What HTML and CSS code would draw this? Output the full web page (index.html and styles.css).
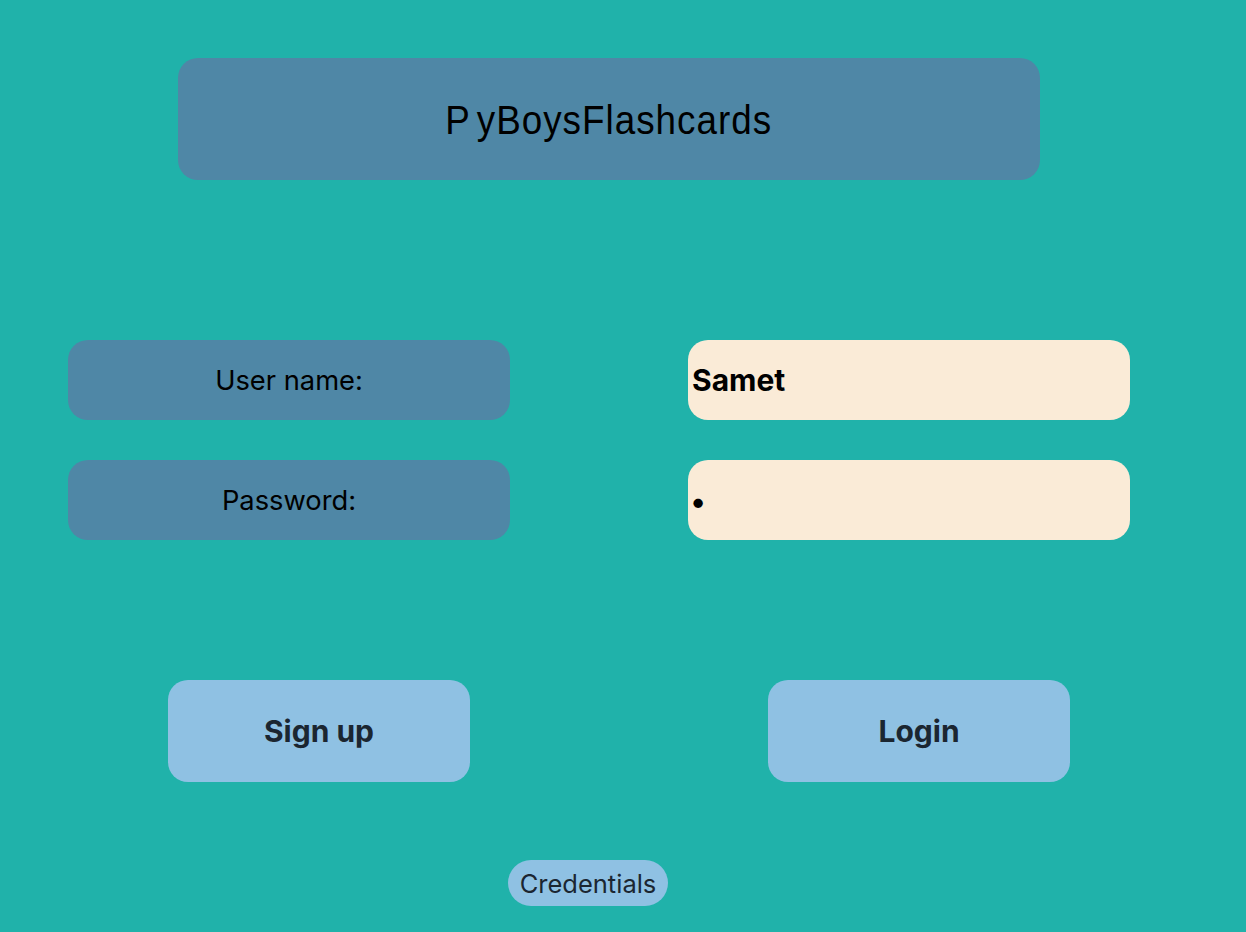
FILE: index.html
```html
<!DOCTYPE html>
<html>
<head>
<meta charset="utf-8">
<title>PyBoysFlashcards</title>
<link rel="stylesheet" href="styles.css">
</head>
<body>
<div class="page">
  <header class="title-box"><h1 class="title">P yBoysFlashcards</h1></header>
  <form class="form">
    <div class="label-box">User name:</div>
    <input class="field field-user" type="text" value="Samet">
    <div class="label-box">Password:</div>
    <input class="field field-pass" type="password" value="a">
  </form>
  <div class="actions">
    <button class="btn" type="button">Sign up</button>
    <button class="btn" type="button">Login</button>
  </div>
  <div class="footer">
    <button class="cred" type="button">Credentials</button>
  </div>
</div>
</body>
</html>
```
FILE: styles.css
```css
html, body {
  margin: 0;
  padding: 0;
  background: #20b2aa;
}
body {
  font-family: Inter, "Noto Sans", sans-serif;
  width: 1246px;
  height: 932px;
  overflow: hidden;
}
.page {
  display: flex;
  flex-direction: column;
  padding-top: 58px;
}
.title-box {
  margin-left: 178px;
  width: 862px;
  height: 122px;
  background: #4f87a6;
  border-radius: 20px;
  display: flex;
  align-items: center;
  justify-content: center;
}
.title {
  margin: 0;
  font-family: "Liberation Sans", Arial, sans-serif;
  font-weight: 400;
  font-size: 40px;
  letter-spacing: 1.1px;
  word-spacing: -5px;
  transform: scaleX(0.92);
  color: #000;
  padding-top: 2px;
}
.form {
  margin: 160px 0 0 68px;
  display: grid;
  grid-template-columns: 442px 442px;
  column-gap: 178px;
  row-gap: 40px;
}
.label-box {
  height: 80px;
  background: #4f87a6;
  border-radius: 20px;
  display: flex;
  align-items: center;
  justify-content: center;
  font-size: 27.3px;
  color: #000;
}
.field {
  box-sizing: border-box;
  height: 80px;
  width: 442px;
  margin: 0;
  border: none;
  outline: none;
  background: #faebd7;
  border-radius: 20px;
  padding: 0 0 0 4px;
  font-family: Inter, "Noto Sans", sans-serif;
  font-size: 30px;
  font-weight: 700;
  color: #000;
}
.field-pass {
  font-size: 30px;
  padding-left: 3px;
  padding-top: 2px;
}
.actions {
  margin: 140px 0 0 168px;
  display: flex;
  gap: 298px;
}
.btn {
  width: 302px;
  height: 102px;
  border: none;
  border-radius: 20px;
  background: #8fc1e3;
  color: #1b2631;
  font-family: Inter, "Noto Sans", sans-serif;
  font-size: 30px;
  font-weight: 700;
  padding: 0;
}
.footer {
  margin: 78px 0 0 508px;
  display: flex;
}
.cred {
  width: 160px;
  height: 46px;
  border: none;
  border-radius: 23px;
  background: #8fc1e3;
  color: #1b2631;
  font-family: Inter, "Noto Sans", sans-serif;
  font-size: 25.5px;
  font-weight: 400;
  padding: 0;
}
```
